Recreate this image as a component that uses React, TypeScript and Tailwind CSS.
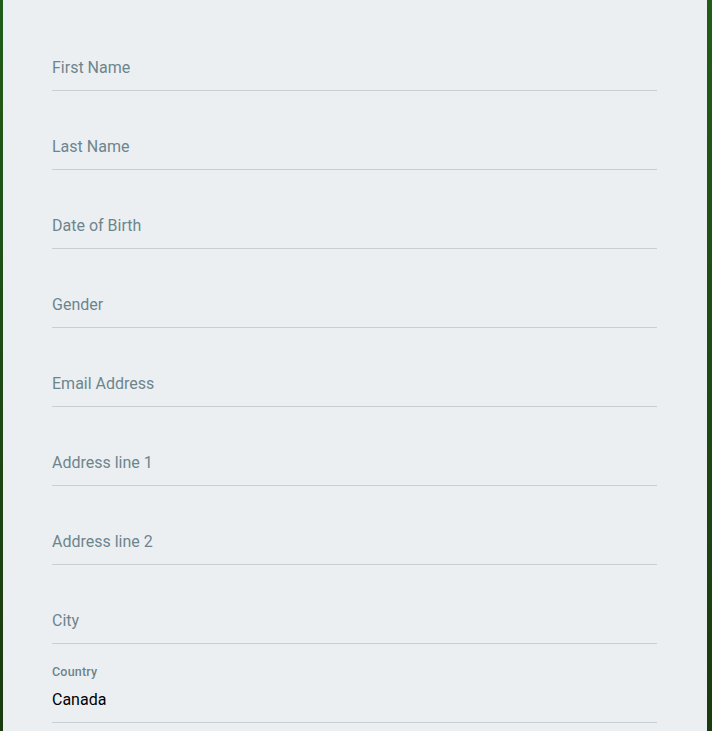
const fields = [
  "First Name",
  "Last Name",
  "Date of Birth",
  "Gender",
  "Email Address",
  "Address line 1",
  "Address line 2",
  "City",
];

export default function App() {
  return (
    <div
      className="flex h-[731px] w-[712px] bg-gradient-to-b from-[#225c18] to-[#1a3a10] pl-[3px] pr-[5px]"
      style={{ fontFamily: "Roboto, 'Noto Sans', sans-serif" }}
    >
      <div className="flex-1 overflow-hidden bg-[#eceff2] pl-[49px] pr-[50px] pt-[12px]">
        {fields.map((label) => (
          <div
            key={label}
            className="h-[79px] border-b border-[#c9ced2] pt-[44px]"
          >
            <span className="block text-[16px] leading-[24px] text-[#6c858d]">
              {label}
            </span>
          </div>
        ))}
        {/* Country, filled */}
        <div className="h-[79px] border-b border-[#c9ced2] pt-[20px]">
          <span className="block text-[12.5px] leading-[16px] font-medium tracking-[0.2px] text-[#6c858d]">
            Country
          </span>
          <span className="mt-[8px] block text-[16px] leading-[24px] text-black">
            Canada
          </span>
        </div>
      </div>
    </div>
  );
}
